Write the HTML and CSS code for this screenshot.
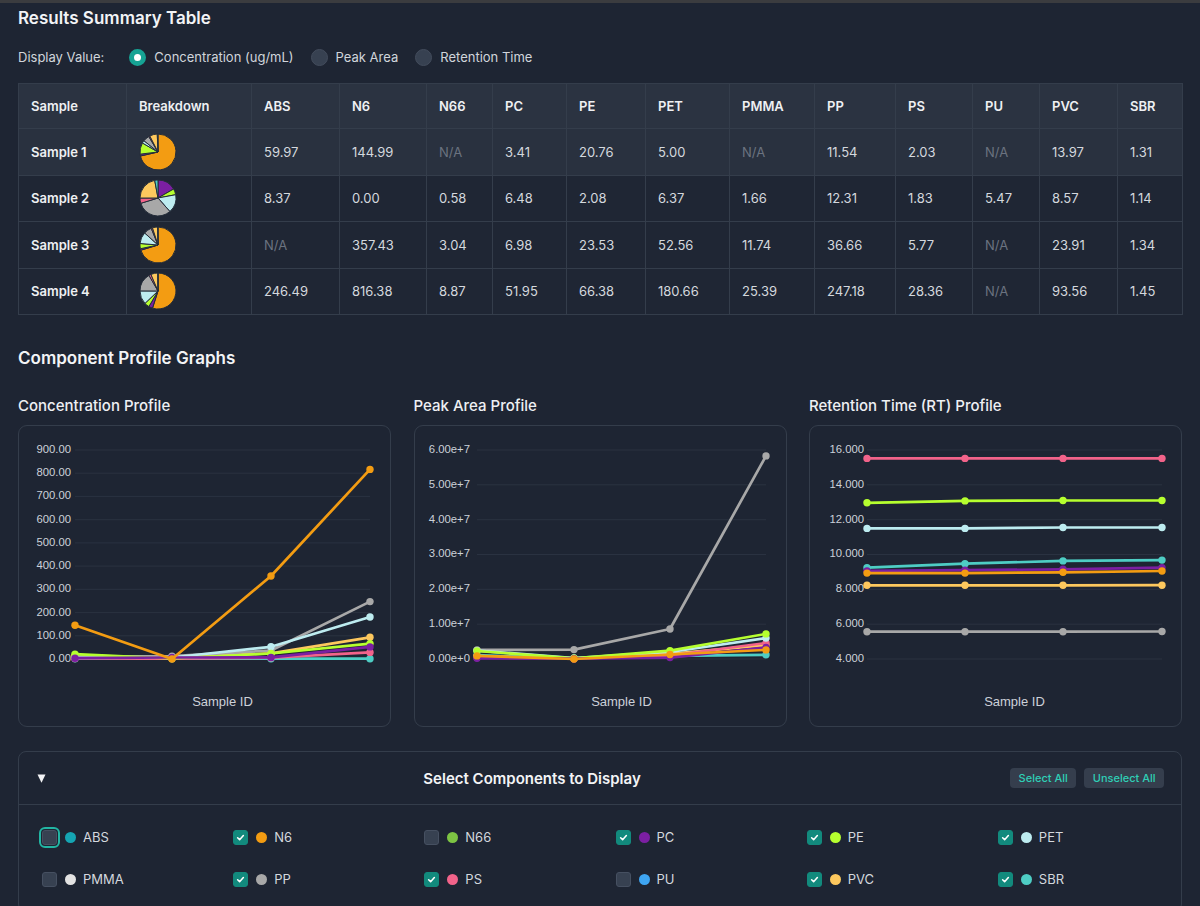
FILE: index.html
```html
<!DOCTYPE html>
<html lang="en">
<head>
<meta charset="utf-8">
<title>Results</title>
<link rel="stylesheet" href="styles.css">
</head>
<body>
<div class="topbar"></div>
<main class="page">
  <section class="summary">
    <h2 class="section-title">Results Summary Table</h2>
    <div class="display-row">
      <span class="display-label">Display Value:</span>
      <label class="radio"><input type="radio" name="dv" checked><span>Concentration (ug/mL)</span></label>
      <label class="radio"><input type="radio" name="dv"><span>Peak Area</span></label>
      <label class="radio"><input type="radio" name="dv"><span>Retention Time</span></label>
    </div>
    <table class="results">
      <colgroup>
        <col class="w-sample"><col class="w-break"><col class="w-abs"><col class="w-n6"><col class="w-n66"><col class="w-pc"><col class="w-pe"><col class="w-pet"><col class="w-pmma"><col class="w-pp"><col class="w-ps"><col class="w-pu"><col class="w-pvc"><col class="w-sbr">
      </colgroup>
      <thead>
        <tr><th>Sample</th><th>Breakdown</th><th>ABS</th><th>N6</th><th>N66</th><th>PC</th><th>PE</th><th>PET</th><th>PMMA</th><th>PP</th><th>PS</th><th>PU</th><th>PVC</th><th>SBR</th></tr>
      </thead>
      <tbody>
        <tr class="hover"><td class="sample">Sample 1</td><td class="pie-cell"><svg class="pie" data-sample="0" width="38" height="38" viewBox="0 0 38 38"></svg></td><td>59.97</td><td>144.99</td><td class="na">N/A</td><td>3.41</td><td>20.76</td><td>5.00</td><td class="na">N/A</td><td>11.54</td><td>2.03</td><td class="na">N/A</td><td>13.97</td><td>1.31</td></tr>
        <tr><td class="sample">Sample 2</td><td class="pie-cell"><svg class="pie" data-sample="1" width="38" height="38" viewBox="0 0 38 38"></svg></td><td>8.37</td><td>0.00</td><td>0.58</td><td>6.48</td><td>2.08</td><td>6.37</td><td>1.66</td><td>12.31</td><td>1.83</td><td>5.47</td><td>8.57</td><td>1.14</td></tr>
        <tr><td class="sample">Sample 3</td><td class="pie-cell"><svg class="pie" data-sample="2" width="38" height="38" viewBox="0 0 38 38"></svg></td><td class="na">N/A</td><td>357.43</td><td>3.04</td><td>6.98</td><td>23.53</td><td>52.56</td><td>11.74</td><td>36.66</td><td>5.77</td><td class="na">N/A</td><td>23.91</td><td>1.34</td></tr>
        <tr><td class="sample">Sample 4</td><td class="pie-cell"><svg class="pie" data-sample="3" width="38" height="38" viewBox="0 0 38 38"></svg></td><td>246.49</td><td>816.38</td><td>8.87</td><td>51.95</td><td>66.38</td><td>180.66</td><td>25.39</td><td>247.18</td><td>28.36</td><td class="na">N/A</td><td>93.56</td><td>1.45</td></tr>
      </tbody>
    </table>
  </section>

  <section class="graphs">
    <h2 class="section-title graphs-title">Component Profile Graphs</h2>
    <div class="chart-grid">
      <div class="chart-col">
        <h3 class="chart-title">Concentration Profile</h3>
        <div class="chart-card"><svg id="chart-conc" class="chart" width="371" height="300" viewBox="0 0 371 300"></svg></div>
      </div>
      <div class="chart-col">
        <h3 class="chart-title">Peak Area Profile</h3>
        <div class="chart-card"><svg id="chart-peak" class="chart" width="371" height="300" viewBox="0 0 371 300"></svg></div>
      </div>
      <div class="chart-col">
        <h3 class="chart-title">Retention Time (RT) Profile</h3>
        <div class="chart-card"><svg id="chart-rt" class="chart" width="371" height="300" viewBox="0 0 371 300"></svg></div>
      </div>
    </div>
  </section>

  <section class="panel">
    <div class="panel-head">
      <svg class="caret" width="9" height="9" viewBox="0 0 9 9"><polygon points="0.5,0.5 8.5,0.5 4.5,8.8" fill="#f3f4f6"/></svg>
      <div class="panel-title">Select Components to Display</div>
      <div class="panel-actions">
        <button class="btn" type="button">Select All</button>
        <button class="btn" type="button">Unselect All</button>
      </div>
    </div>
    <div class="comp-grid">
      <label class="comp"><input type="checkbox" class="sr"><span class="box focused"><svg viewBox="0 0 15 15"><path d="M4.2 7.8 L6.5 10 L10.8 5.2"/></svg></span><span class="dot c-abs"></span>ABS</label>
      <label class="comp"><input type="checkbox" class="sr" checked><span class="box"><svg viewBox="0 0 15 15"><path d="M4.2 7.8 L6.5 10 L10.8 5.2"/></svg></span><span class="dot c-n6"></span>N6</label>
      <label class="comp"><input type="checkbox" class="sr"><span class="box"><svg viewBox="0 0 15 15"><path d="M4.2 7.8 L6.5 10 L10.8 5.2"/></svg></span><span class="dot c-n66"></span>N66</label>
      <label class="comp"><input type="checkbox" class="sr" checked><span class="box"><svg viewBox="0 0 15 15"><path d="M4.2 7.8 L6.5 10 L10.8 5.2"/></svg></span><span class="dot c-pc"></span>PC</label>
      <label class="comp"><input type="checkbox" class="sr" checked><span class="box"><svg viewBox="0 0 15 15"><path d="M4.2 7.8 L6.5 10 L10.8 5.2"/></svg></span><span class="dot c-pe"></span>PE</label>
      <label class="comp"><input type="checkbox" class="sr" checked><span class="box"><svg viewBox="0 0 15 15"><path d="M4.2 7.8 L6.5 10 L10.8 5.2"/></svg></span><span class="dot c-pet"></span>PET</label>
      <label class="comp"><input type="checkbox" class="sr"><span class="box"><svg viewBox="0 0 15 15"><path d="M4.2 7.8 L6.5 10 L10.8 5.2"/></svg></span><span class="dot c-pmma"></span>PMMA</label>
      <label class="comp"><input type="checkbox" class="sr" checked><span class="box"><svg viewBox="0 0 15 15"><path d="M4.2 7.8 L6.5 10 L10.8 5.2"/></svg></span><span class="dot c-pp"></span>PP</label>
      <label class="comp"><input type="checkbox" class="sr" checked><span class="box"><svg viewBox="0 0 15 15"><path d="M4.2 7.8 L6.5 10 L10.8 5.2"/></svg></span><span class="dot c-ps"></span>PS</label>
      <label class="comp"><input type="checkbox" class="sr"><span class="box"><svg viewBox="0 0 15 15"><path d="M4.2 7.8 L6.5 10 L10.8 5.2"/></svg></span><span class="dot c-pu"></span>PU</label>
      <label class="comp"><input type="checkbox" class="sr" checked><span class="box"><svg viewBox="0 0 15 15"><path d="M4.2 7.8 L6.5 10 L10.8 5.2"/></svg></span><span class="dot c-pvc"></span>PVC</label>
      <label class="comp"><input type="checkbox" class="sr" checked><span class="box"><svg viewBox="0 0 15 15"><path d="M4.2 7.8 L6.5 10 L10.8 5.2"/></svg></span><span class="dot c-sbr"></span>SBR</label>
    </div>
  </section>
</main>
<script src="script.js"></script>
</body>
</html>
```

FILE: styles.css
```css
* { box-sizing: border-box; }
html, body { margin: 0; padding: 0; }
body {
  background: #1e2533;
  color: #e5e7eb;
  font-family: Inter, "Noto Sans", "Liberation Sans", sans-serif;
  font-size: 13px;
}
.topbar { height: 3px; background: #3b3c3f; }
.page { padding: 4px 18px 0; }

.section-title {
  margin: 0;
  font-size: 17px;
  line-height: 22px;
  font-weight: 600;
  color: #f3f4f6;
}

.display-row {
  display: flex;
  align-items: center;
  height: 20px;
  margin-top: 18px;
  color: #d1d5db;
  font-size: 13px;
}
.display-label { margin-right: 25px; }
.radio { display: flex; align-items: center; margin-right: 17px; }
.radio input {
  appearance: none;
  -webkit-appearance: none;
  width: 17px;
  height: 17px;
  margin: 0 8px 0 0;
  border-radius: 50%;
  background: #374151;
  border: 1px solid #434c5c;
}
.radio input:checked { background: #ffffff; border: 5px solid #16a394; }

.results {
  margin-top: 16px;
  width: 100%;
  border-collapse: collapse;
  table-layout: fixed;
  border: 1px solid #343d4b;
}
.w-sample { width: 108px; } .w-break { width: 125px; } .w-abs { width: 88px; } .w-n6 { width: 87px; }
.w-n66 { width: 66px; } .w-pc { width: 74px; } .w-pe { width: 79px; } .w-pet { width: 84px; }
.w-pmma { width: 85px; } .w-pp { width: 81px; } .w-ps { width: 77px; } .w-pu { width: 67px; }
.w-pvc { width: 78px; } .w-sbr { width: 65px; }
.results th, .results td {
  border: 1px solid #343d4b;
  padding: 0 12px;
  text-align: left;
  vertical-align: middle;
  white-space: nowrap;
}
.results th {
  height: 45px;
  background: #2b3341;
  color: #eef0f3;
  font-weight: 600;
}
.results td { height: 46.5px; color: #d4d8de; }
.results tbody tr { background: #1f2634; }
.results tbody tr.hover { background: #29313f; }
.results td.sample { font-weight: 600; color: #eef0f3; }
.results td.na { color: #6b7380; }
.pie-cell .pie { display: block; }

.graphs-title { margin-top: 32px; }
.chart-grid {
  display: grid;
  grid-template-columns: repeat(3, 1fr);
  column-gap: 22.5px;
  margin-top: 27px;
}
.chart-title {
  margin: 0 0 9px;
  font-size: 15px;
  line-height: 20px;
  font-weight: 500;
  color: #eef0f3;
}
.chart-card {
  height: 302px;
  border: 1px solid #343d4b;
  border-radius: 9px;
  overflow: hidden;
}
.chart { display: block; }
.chart .grid { stroke: #2a3241; stroke-width: 1; }
.chart .tick {
  font-family: "Liberation Sans", Arial, sans-serif;
  font-size: 11.3px;
  fill: #ccd1d9;
  text-anchor: end;
  dominant-baseline: middle;
}
.chart .axis-title {
  font-family: "Liberation Sans", Arial, sans-serif;
  font-size: 13px;
  fill: #ccd1d9;
  text-anchor: middle;
  dominant-baseline: middle;
}

.panel {
  margin-top: 24px;
  border: 1px solid #343d4b;
  border-radius: 8px;
}
.panel-head {
  display: flex;
  align-items: center;
  height: 53px;
  padding: 0 17px 0 18px;
  border-bottom: 1px solid #343d4b;
}
.caret { display: block; }
.panel-title {
  flex: 1;
  padding-left: 8px;
  text-align: center;
  font-size: 15px;
  font-weight: 600;
  color: #f3f4f6;
}
.panel-actions { display: flex; gap: 8px; }
.btn {
  height: 20px;
  padding: 0 8.5px;
  border: none;
  border-radius: 4px;
  background: #353e4d;
  color: #2fcfb6;
  font-family: Inter, "Noto Sans", sans-serif;
  font-size: 11px;
  font-weight: 500;
}

.comp-grid {
  display: grid;
  grid-template-columns: repeat(6, 1fr);
  column-gap: 31px;
  row-gap: 26px;
  padding: 24px 23px 24px;
}
.comp {
  display: flex;
  align-items: center;
  height: 16px;
  font-size: 13px;
  color: #d4d8de;
}
.sr { position: absolute; opacity: 0; width: 0; height: 0; margin: 0; }
.box {
  width: 15px;
  height: 15px;
  margin-right: 8px;
  border-radius: 3px;
  background: #374151;
  border: 1px solid #465061;
  display: flex;
  align-items: center;
  justify-content: center;
}
.box svg { width: 15px; height: 15px; display: none; }
.box svg path { fill: none; stroke: #ffffff; stroke-width: 1.8; stroke-linecap: round; stroke-linejoin: round; }
.sr:checked + .box { background: #128a7d; border-color: #128a7d; }
.sr:checked + .box svg { display: block; }
.box.focused { outline: 2px solid #22b5a3; outline-offset: 1px; }
.dot { width: 11px; height: 11px; border-radius: 50%; margin-right: 7px; }
.c-abs { background: #15a5b3; } .c-n6 { background: #f39c12; } .c-n66 { background: #7dc443; }
.c-pc { background: #7b1fa2; } .c-pe { background: #b6ff2f; } .c-pet { background: #bdecf0; }
.c-pmma { background: #e3e3e3; } .c-pp { background: #a8a8a8; } .c-ps { background: #f2638a; }
.c-pu { background: #3ea5f2; } .c-pvc { background: #fdc85e; } .c-sbr { background: #4ecdc4; }
```

FILE: script.js
```js
(function () {
  var COLORS = {
    ABS: '#15a5b3', N6: '#f39c12', N66: '#7dc443', PC: '#7b1fa2', PE: '#b6ff2f', PET: '#bdecf0',
    PMMA: '#e3e3e3', PP: '#a8a8a8', PS: '#f2638a', PU: '#3ea5f2', PVC: '#fdc85e', SBR: '#4ecdc4'
  };
  var CHECKED = ['N6', 'PC', 'PE', 'PET', 'PP', 'PS', 'PVC', 'SBR'];
  var CONC = {
    N6: [144.99, 0, 357.43, 816.38], PC: [3.41, 6.48, 6.98, 51.95], PE: [20.76, 2.08, 23.53, 66.38],
    PET: [5, 6.37, 52.56, 180.66], PP: [11.54, 12.31, 36.66, 247.18], PS: [2.03, 1.83, 5.77, 28.36],
    PVC: [13.97, 8.57, 23.91, 93.56], SBR: [1.31, 1.14, 1.34, 1.45]
  };
  var PEAK = {
    N6: [0.09, 0.0, 0.13, 0.26], PC: [0.02, 0.01, 0.04, 0.33], PE: [0.23, 0.02, 0.24, 0.72],
    PET: [0.24, 0.03, 0.20, 0.60], PP: [0.26, 0.27, 0.86, 5.83], PS: [0.04, 0.01, 0.10, 0.46],
    PVC: [0.08, 0.01, 0.15, 0.40], SBR: [0.11, 0.02, 0.09, 0.12]
  };
  var RT = {
    N6: [8.93, 8.93, 8.98, 9.05], PC: [9.06, 9.1, 9.15, 9.25], PE: [12.97, 13.08, 13.1, 13.1],
    PET: [11.5, 11.5, 11.55, 11.55], PP: [5.57, 5.57, 5.57, 5.58], PS: [15.52, 15.52, 15.52, 15.52],
    PVC: [8.23, 8.23, 8.23, 8.24], SBR: [9.24, 9.47, 9.63, 9.68]
  };

  function pies() {
    var list = document.querySelectorAll('.pie');
    for (var i = 0; i < list.length; i++) {
      var svg = list[i];
      var s = +svg.getAttribute('data-sample');
      var total = 0;
      CHECKED.forEach(function (c) { total += CONC[c][s] || 0; });
      var a0 = -Math.PI / 2, html = '', cx = 19, cy = 19, r = 18;
      CHECKED.forEach(function (c) {
        var v = CONC[c][s] || 0;
        if (!v) return;
        var a1 = a0 + v / total * 2 * Math.PI;
        var x0 = cx + r * Math.cos(a0), y0 = cy + r * Math.sin(a0);
        var x1 = cx + r * Math.cos(a1), y1 = cy + r * Math.sin(a1);
        var large = (a1 - a0) > Math.PI ? 1 : 0;
        html += '<path d="M' + cx + ' ' + cy + 'L' + x0.toFixed(2) + ' ' + y0.toFixed(2) +
          'A' + r + ' ' + r + ' 0 ' + large + ' 1 ' + x1.toFixed(2) + ' ' + y1.toFixed(2) +
          'Z" fill="' + COLORS[c] + '" stroke="#242c39" stroke-width="1" stroke-linejoin="round"/>';
        a0 = a1;
      });
      svg.innerHTML = html;
    }
  }

  function chart(id, cfg) {
    var svg = document.getElementById(id);
    var xs = cfg.xs, out = '';
    function yOf(v) { return cfg.y0 - (v - cfg.min) / (cfg.max - cfg.min) * (cfg.y0 - cfg.y1); }
    for (var t = cfg.min; t <= cfg.max + 1e-9; t += cfg.step) {
      var y = yOf(t).toFixed(1);
      out += '<line class="grid" x1="' + xs[0] + '" x2="' + xs[3] + '" y1="' + y + '" y2="' + y + '"/>';
      out += '<text class="tick" x="' + cfg.labelX + '" y="' + y + '">' + cfg.fmt(t) + '</text>';
    }
    var order = CHECKED.slice().reverse();
    order.forEach(function (c) {
      var d = cfg.data[c], pts = [];
      for (var k = 0; k < 4; k++) pts.push(xs[k] + ',' + yOf(d[k]).toFixed(1));
      out += '<polyline points="' + pts.join(' ') + '" fill="none" stroke="' + COLORS[c] +
        '" stroke-width="2.7" stroke-linejoin="round" stroke-linecap="round"/>';
      for (var j = 0; j < 4; j++) {
        out += '<circle cx="' + xs[j] + '" cy="' + yOf(d[j]).toFixed(1) + '" r="3.7" fill="' + COLORS[c] + '"/>';
      }
    });
    out += '<text class="axis-title" x="' + ((xs[0] + xs[3]) / 2) + '" y="' + cfg.titleY + '">Sample ID</text>';
    svg.innerHTML = out;
  }

  pies();
  chart('chart-conc', {
    xs: [56, 153, 252, 351], y1: 24, y0: 233, min: 0, max: 900, step: 100, labelX: 52, titleY: 277,
    fmt: function (t) { return t.toFixed(2); }, data: CONC
  });
  chart('chart-peak', {
    xs: [62, 159, 255, 351], y1: 24, y0: 233, min: 0, max: 6, step: 1, labelX: 55, titleY: 277,
    fmt: function (t) { return t === 0 ? '0.00e+0' : t.toFixed(2) + 'e+7'; }, data: PEAK
  });
  chart('chart-rt', {
    xs: [57, 155, 253, 352], y1: 24, y0: 233, min: 4, max: 16, step: 2, labelX: 54, titleY: 277,
    fmt: function (t) { return t.toFixed(3); }, data: RT
  });
})();
```
